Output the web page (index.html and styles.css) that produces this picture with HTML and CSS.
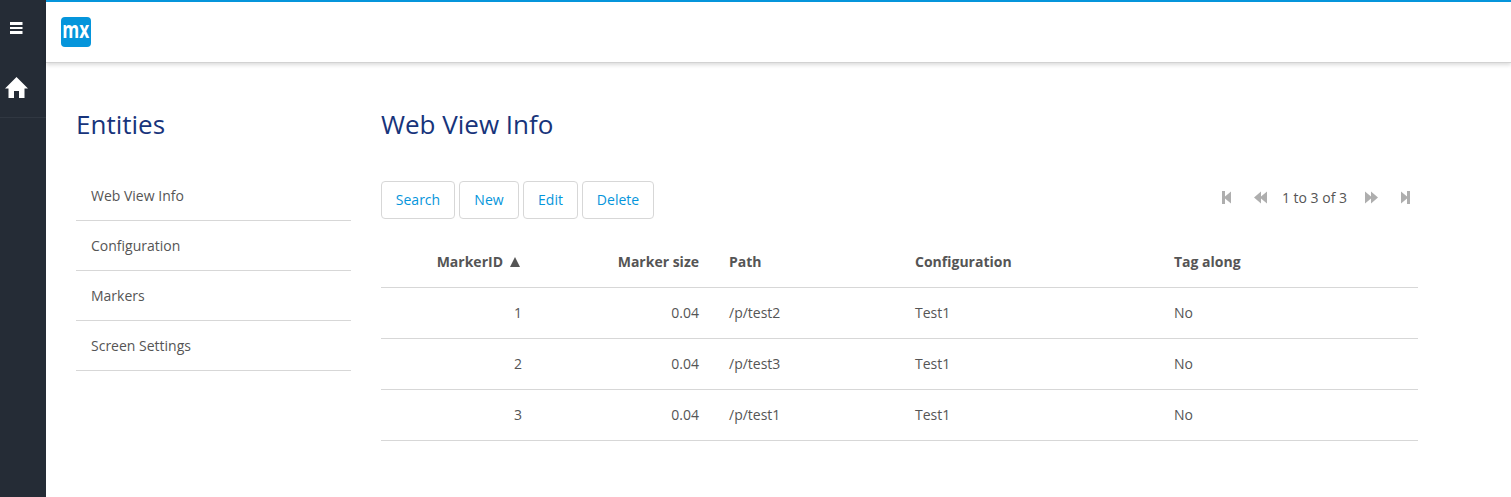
FILE: index.html
```html
<!DOCTYPE html>
<html lang="en">
<head>
<meta charset="utf-8">
<title>Web View Info</title>
<link rel="stylesheet" href="styles.css">
</head>
<body>
<div class="app">
  <aside class="sidebar">
    <button class="toggle" aria-label="Menu">
      <svg width="13" height="12" viewBox="0 0 13 12" fill="#fff"><path d="M0 0h12.500v3H0zM0 5h12.500v2H0zM0 9h12.500v3H0z"/></svg>
    </button>
    <a class="home" aria-label="Home">
      <svg width="23" height="21" viewBox="0 0 23 21" fill="#fff"><path d="M11.500 0 0 11.500h3.500V21H9v-7h5v7h5.500v-9.500H23z"/></svg>
    </a>
  </aside>
  <div class="page">
    <header class="topbar">
      <div class="logo"><svg width="30" height="30" viewBox="0 0 30 30"><text class="logo-text" x="1.200" y="21" textLength="27" lengthAdjust="spacingAndGlyphs">mx</text></svg></div>
    </header>
    <main class="content">
      <section class="entities">
        <h2>Entities</h2>
        <ul class="nav">
          <li>Web View Info</li>
          <li>Configuration</li>
          <li>Markers</li>
          <li>Screen Settings</li>
        </ul>
      </section>
      <section class="grid">
        <h2>Web View Info</h2>
        <div class="toolbar">
          <div class="actions">
            <button class="btn search">Search</button>
            <button class="btn new">New</button>
            <button class="btn edit">Edit</button>
            <button class="btn delete">Delete</button>
          </div>
          <div class="paging">
            <svg class="first" width="9" height="13" viewBox="0 0 9 13"><path d="M0 0h3v5.500L9 .5v12L3 7.500V13H0z"/></svg>
            <svg class="prev" width="13" height="13" viewBox="0 0 13 13"><path d="M0 6.500 7 .5v5l6-5v12l-6-5v5z"/></svg>
            <span class="range">1 to 3 of 3</span>
            <svg class="next" width="13" height="13" viewBox="0 0 13 13"><path d="M13 6.500 6 .5v5l-6-5v12l6-5v5z"/></svg>
            <svg class="last" width="9" height="13" viewBox="0 0 9 13"><path d="M9 0H6v5.500L0 .5v12l6-5V13h3z"/></svg>
          </div>
        </div>
        <table>
          <colgroup><col class="c-id"><col class="c-size"><col class="c-path"><col class="c-conf"><col class="c-tag"></colgroup>
          <thead>
            <tr><th class="num"><span class="sorted">MarkerID <svg width="10" height="10" viewBox="0 0 10 10"><path d="M5 0l5 10H0z"/></svg></span></th><th class="num">Marker size</th><th>Path</th><th>Configuration</th><th>Tag along</th></tr>
          </thead>
          <tbody>
            <tr><td class="num">1</td><td class="num">0.04</td><td>/p/test2</td><td>Test1</td><td>No</td></tr>
            <tr><td class="num">2</td><td class="num">0.04</td><td>/p/test3</td><td>Test1</td><td>No</td></tr>
            <tr><td class="num">3</td><td class="num">0.04</td><td>/p/test1</td><td>Test1</td><td>No</td></tr>
          </tbody>
        </table>
      </section>
    </main>
  </div>
</div>
</body>
</html>
```
FILE: styles.css
```css
* { box-sizing: border-box; }
body {
  margin: 0;
  background: #fff;
  color: #555;
  font: 14px/20px "Open Sans", sans-serif;
  overflow: hidden;
}
svg { display: block; overflow: visible; }
.app { display: flex; height: 497px; }
.sidebar { width: 46px; flex: none; background: #252c36; }
.toggle {
  display: block;
  width: 46px;
  height: 58px;
  padding: 22px 0 24px 10px;
  border: 0;
  background: none;
}
.home {
  display: block;
  height: 60px;
  padding: 19px 0 0 5px;
  border-bottom: 1px solid #303741;
}
.page { flex: 1; min-width: 0; }
.topbar {
  height: 63px;
  padding: 15px;
  border-top: 2px solid #0595db;
  border-bottom: 1px solid #d2d2d2;
  box-shadow: 0 2px 4px rgba(0, 0, 0, .14);
}
.logo {
  width: 30px;
  height: 30px;
  border-radius: 4px;
  background: #0595db;
}
.logo-text { font: bold 23px "Open Sans", sans-serif; fill: #fff; }
.content { display: flex; gap: 30px; padding: 44px 0 0 30px; }
h2 {
  margin: 0;
  color: #17347b;
  font-size: 26px;
  font-weight: 400;
  line-height: 34px;
}
.entities { width: 275px; }
.nav { list-style: none; margin: 30px 0 0; padding: 0; }
.nav li { height: 50px; padding: 15px 15px 14px; border-bottom: 1px solid #d7d7d7; }
.grid { width: 1037px; }
.toolbar {
  display: flex;
  justify-content: space-between;
  align-items: flex-start;
  margin-top: 40px;
}
.actions { display: flex; gap: 4px; }
.btn {
  height: 38px;
  padding: 0;
  border: 1px solid #d7d7d7;
  border-radius: 4px;
  background: #fff;
  color: #0595db;
  font: inherit;
}
.search { width: 74px; }
.new { width: 60px; }
.edit { width: 55px; }
.delete { width: 72px; }
.paging {
  display: flex;
  align-items: center;
  height: 34px;
  padding-right: 8px;
  fill: #aeaeae;
}
.paging svg { margin-bottom: 1px; }
.paging .first { margin-right: 23px; }
.range { margin: 0 18px 0 15px; }
.paging .last { margin-left: 23px; }
table {
  width: 100%;
  margin-top: 18px;
  border-collapse: separate;
  border-spacing: 0;
  table-layout: fixed;
}
.c-id { width: 156px; }
.c-size { width: 177px; }
.c-path { width: 186px; }
.c-conf, .c-tag { width: 259px; }
th, td {
  height: 51px;
  padding: 15px;
  border-bottom: 1px solid #d7d7d7;
  text-align: left;
  white-space: nowrap;
}
th { font-weight: 700; }
.num { text-align: right; }
.sorted { display: inline-flex; align-items: center; gap: 7px; padding-right: 2px; fill: #555; }
```
